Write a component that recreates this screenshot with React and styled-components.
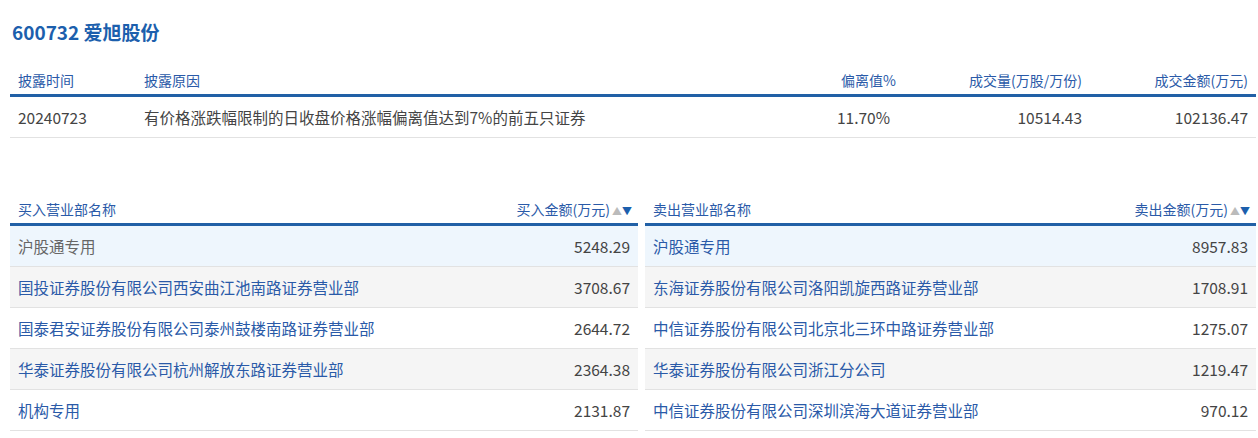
import React from "react";
import styled, { createGlobalStyle } from "styled-components";

const G = createGlobalStyle`
  body { margin: 0; background: #fff; font-family: "Microsoft YaHei", "Noto Sans CJK SC", sans-serif; }
`;
const Page = styled.div`padding: 18px 2px 0 10px; width: 1246px;`;
const Title = styled.h1`margin: 0 0 20px 2px; font-size: 19px; font-weight: bold; color: #1c5fad; line-height: 28px;`;
const Table = styled.table`width: 100%; border-collapse: collapse; font-size: 14px;`;
const Th = styled.th`
  font-weight: normal; color: #2a5aa8; height: 28px; padding: 0 ${p => p.$pr || 8}px 0 8px;
  text-align: ${p => (p.$right ? "right" : "left")}; border-bottom: 3px solid #2160a6; width: ${p => p.$w || "auto"};
  vertical-align: middle; white-space: nowrap;
`;
const Td = styled.td`
  height: 40px; padding: 0 ${p => p.$pr || 8}px 0 8px; font-size: 15.5px; color: ${p => (p.$gray ? "#666" : p.$link ? "#2a5aa8" : "#444")};
  text-align: ${p => (p.$right ? "right" : "left")}; border-bottom: 1px solid #e2e2e2; white-space: nowrap;
`;
const Tr = styled.tr`background: ${p => p.$bg};`;
const Split = styled.div`display: grid; grid-template-columns: 628px 611px; gap: 7px; margin-top: 57px;`;
const Sort = styled.span`font-size: 10px; margin-left: 2px; color: #bbb; b { color: #1c5fad; font-weight: normal; }`;

const buy = [["沪股通专用", "5248.29"], ["国投证券股份有限公司西安曲江池南路证券营业部", "3708.67"], ["国泰君安证券股份有限公司泰州鼓楼南路证券营业部", "2644.72"], ["华泰证券股份有限公司杭州解放东路证券营业部", "2364.38"], ["机构专用", "2131.87"]];
const sell = [["沪股通专用", "8957.83"], ["东海证券股份有限公司洛阳凯旋西路证券营业部", "1708.91"], ["中信证券股份有限公司北京北三环中路证券营业部", "1275.07"], ["华泰证券股份有限公司浙江分公司", "1219.47"], ["中信证券股份有限公司深圳滨海大道证券营业部", "970.12"]];
const bgs = ["#eef6fd", "#f5f5f5", "#fff", "#f5f5f5", "#fff"];

const Side = ({ name, amt, rows, firstGray }) => (
  <Table>
    <thead><tr><Th>{name}</Th><Th $right $pr={6}>{amt}<Sort>▲<b>▼</b></Sort></Th></tr></thead>
    <tbody>{rows.map((r, i) => (
      <Tr key={i} $bg={bgs[i]}><Td $link $gray={i === 0 && firstGray}>{r[0]}</Td><Td $right>{r[1]}</Td></Tr>
    ))}</tbody>
  </Table>
);

export default function App() {
  return (<>
    <G />
    <Page>
      <Title>600732 爱旭股份</Title>
      <Table>
        <thead><tr>
          <Th $w="110px">披露时间</Th><Th>披露原因</Th><Th $right $w="150px">偏离值%</Th><Th $right $w="170px">成交量(万股/万份)</Th><Th $right $w="150px">成交金额(万元)</Th>
        </tr></thead>
        <tbody><tr>
          <Td>20240723</Td><Td>有价格涨跌幅限制的日收盘价格涨幅偏离值达到7%的前五只证券</Td><Td $right $pr={14}>11.70%</Td><Td $right>10514.43</Td><Td $right>102136.47</Td>
        </tr></tbody>
      </Table>
      <Split>
        <Side name="买入营业部名称" amt="买入金额(万元)" rows={buy} firstGray />
        <Side name="卖出营业部名称" amt="卖出金额(万元)" rows={sell} />
      </Split>
    </Page>
  </>);
}
